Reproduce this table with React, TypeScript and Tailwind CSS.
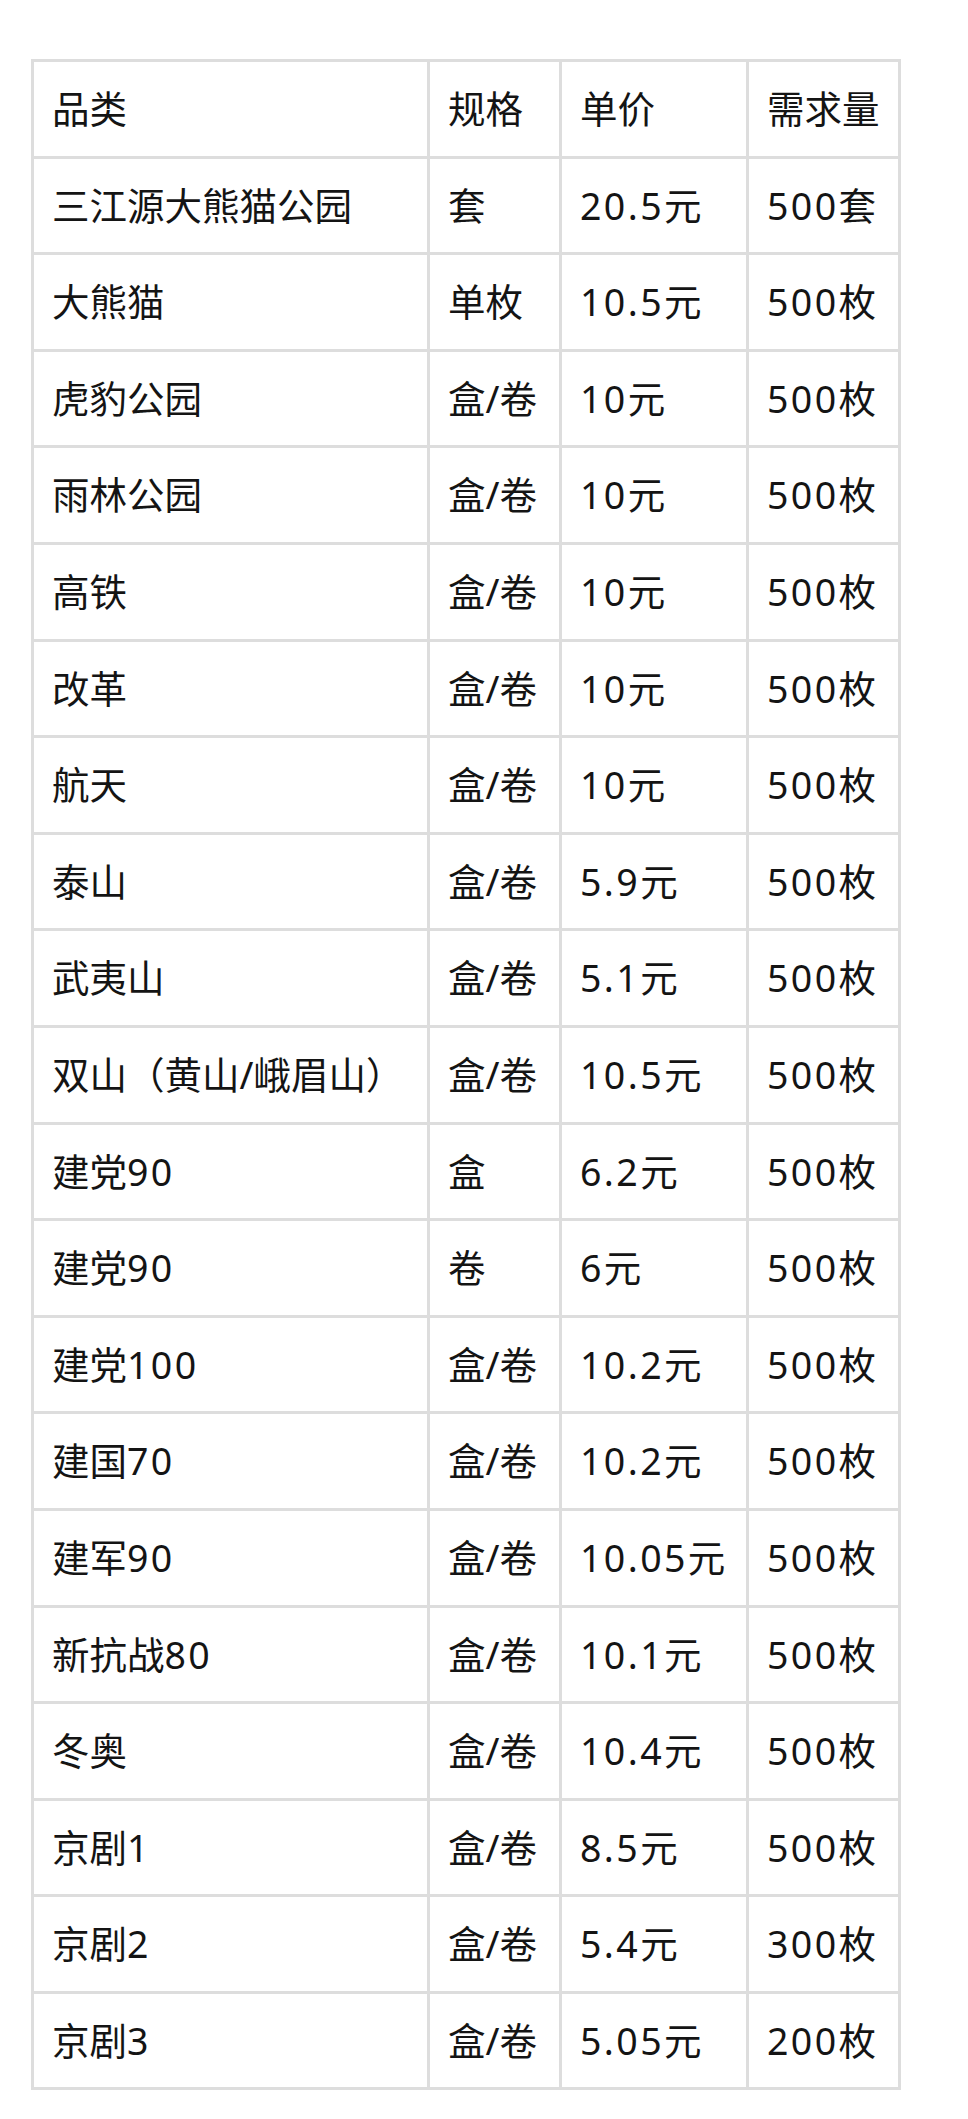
const rows: [string, string, string, string][] = [
  ["品类", "规格", "单价", "需求量"],
  ["三江源大熊猫公园", "套", "20.5元", "500套"],
  ["大熊猫", "单枚", "10.5元", "500枚"],
  ["虎豹公园", "盒/卷", "10元", "500枚"],
  ["雨林公园", "盒/卷", "10元", "500枚"],
  ["高铁", "盒/卷", "10元", "500枚"],
  ["改革", "盒/卷", "10元", "500枚"],
  ["航天", "盒/卷", "10元", "500枚"],
  ["泰山", "盒/卷", "5.9元", "500枚"],
  ["武夷山", "盒/卷", "5.1元", "500枚"],
  ["双山（黄山/峨眉山）", "盒/卷", "10.5元", "500枚"],
  ["建党90", "盒", "6.2元", "500枚"],
  ["建党90", "卷", "6元", "500枚"],
  ["建党100", "盒/卷", "10.2元", "500枚"],
  ["建国70", "盒/卷", "10.2元", "500枚"],
  ["建军90", "盒/卷", "10.05元", "500枚"],
  ["新抗战80", "盒/卷", "10.1元", "500枚"],
  ["冬奥", "盒/卷", "10.4元", "500枚"],
  ["京剧1", "盒/卷", "8.5元", "500枚"],
  ["京剧2", "盒/卷", "5.4元", "300枚"],
  ["京剧3", "盒/卷", "5.05元", "200枚"],
];

// digits in the screenshot run a little wider than Noto Sans
function Cell({ text }: { text: string }) {
  const parts = text.split(/([0-9.]+)/);
  return (
    <>
      {parts.map((p, k) =>
        /^[0-9.]+$/.test(p) ? (
          <span key={k} className="tracking-[2.4px]">
            {p}
          </span>
        ) : (
          <span key={k}>{p}</span>
        )
      )}
    </>
  );
}

export default function App() {
  return (
    <div className="min-h-[2119px] w-full bg-white pt-[59px] pl-[31px] pb-[28px]">
      {/* Table */}
      <div
        className="grid w-fit grid-cols-[396px_132px_187px_152px] border-l-[3px] border-t-[3px] border-[#dddddd] text-[37.5px] leading-none text-[#141414]"
        style={{ fontFamily: '"Noto Sans", "Noto Sans CJK SC", sans-serif' }}
      >
        {rows.map((row, i) =>
          row.map((cell, j) => (
            <div
              key={`${i}-${j}`}
              className="flex h-[96.6px] items-center whitespace-nowrap border-b-[3px] border-r-[3px] border-[#dddddd] pl-[18px]"
            >
              <Cell text={cell} />
            </div>
          ))
        )}
      </div>
    </div>
  );
}
